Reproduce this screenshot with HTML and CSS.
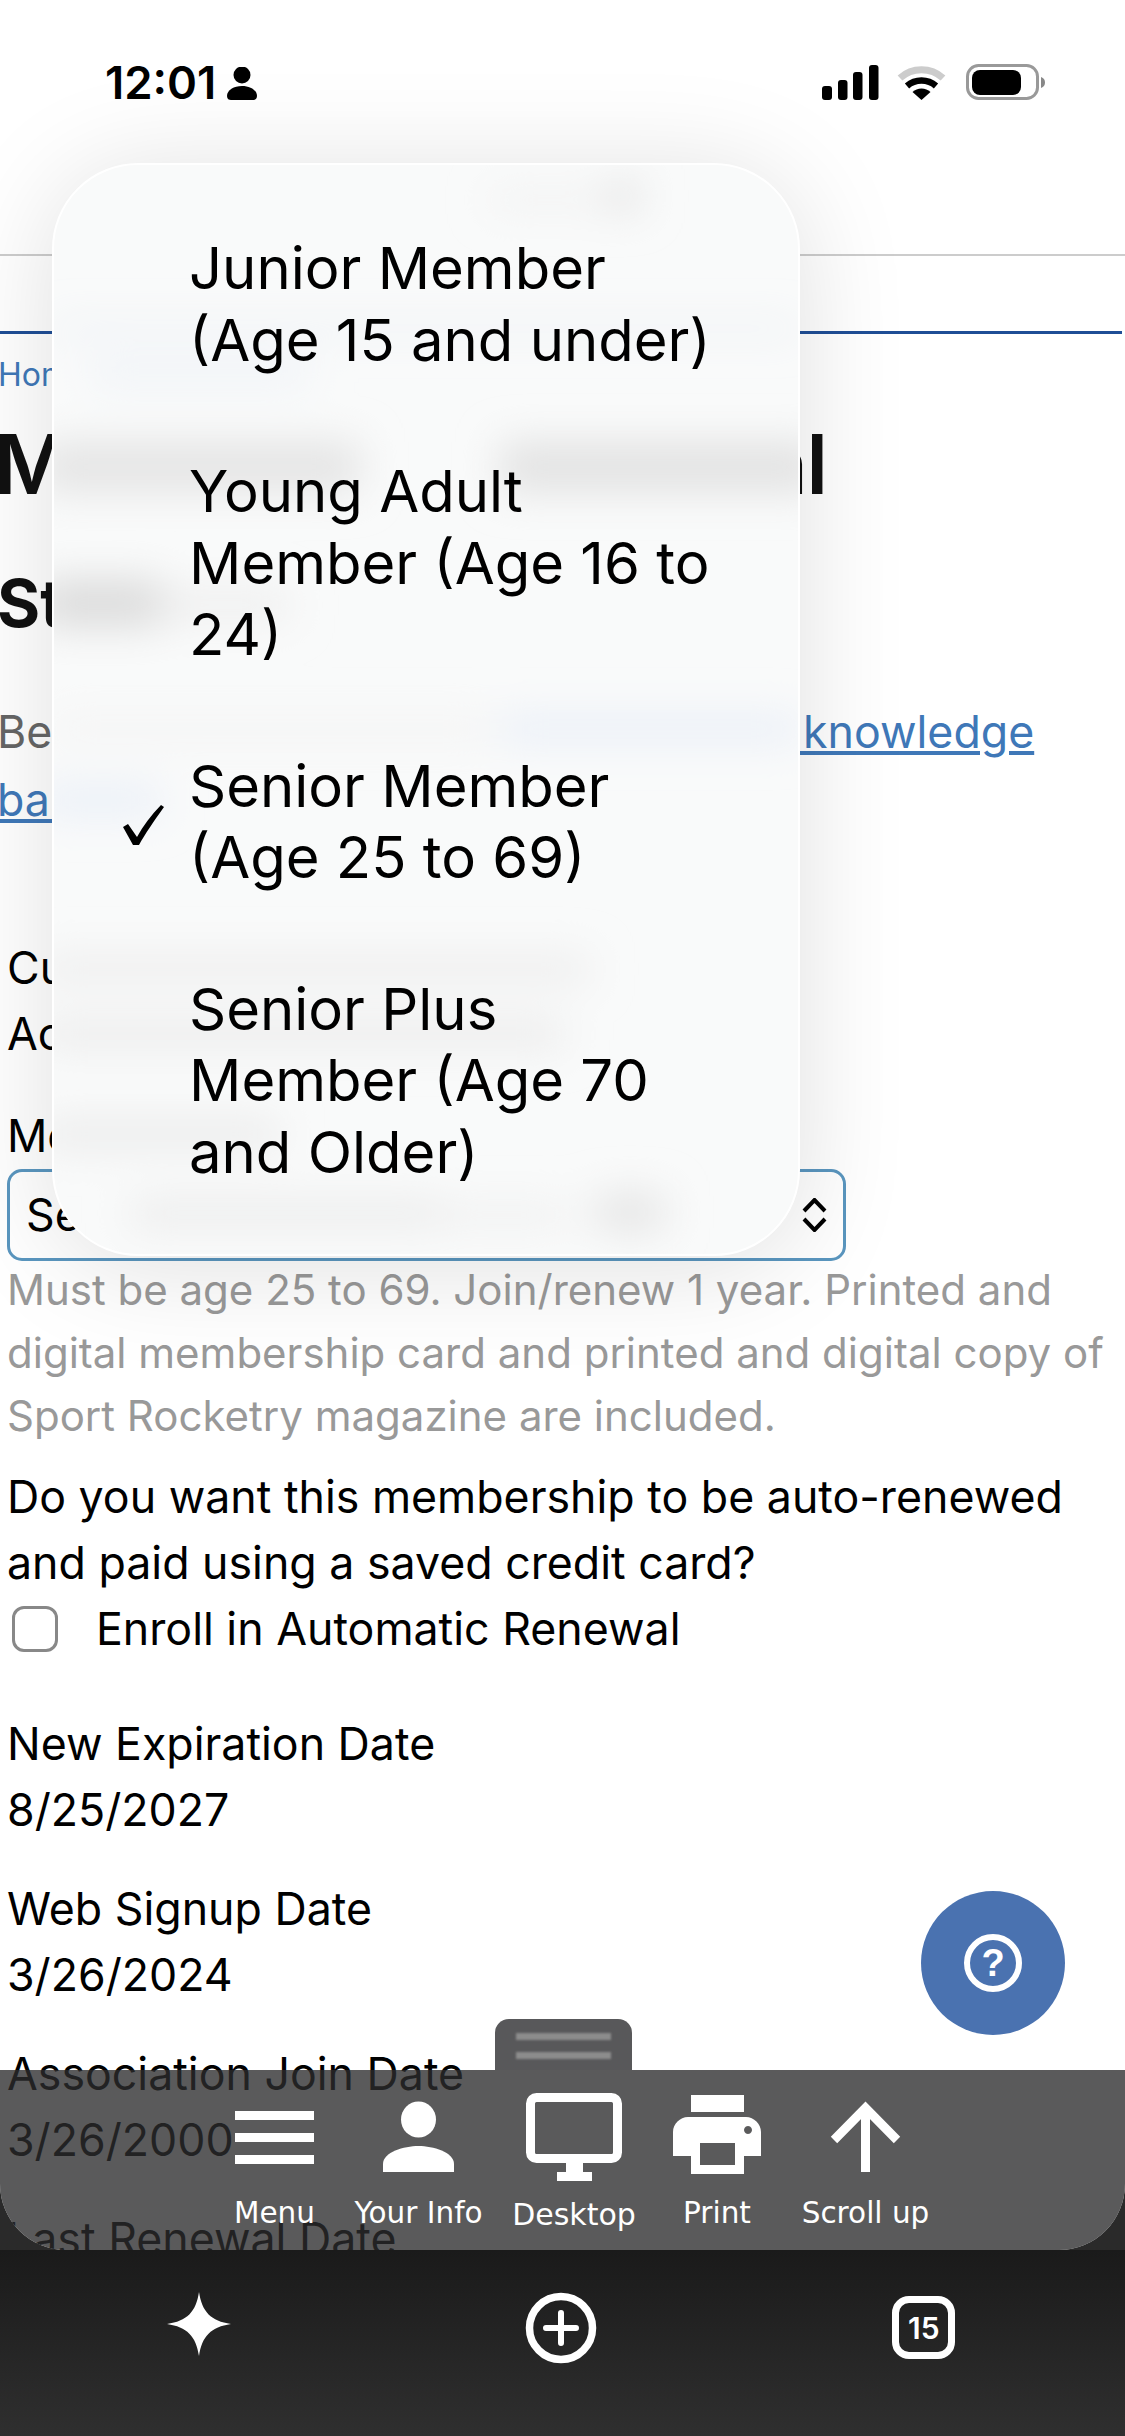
FILE: index.html
```html
<!DOCTYPE html>
<html>
<head>
  <meta name="viewport" content="width=device-width, initial-scale=1.0">
  <title>Membership Renewal</title>
  <link rel="stylesheet" href="styles.css">
</head>
<body>
  <div class="screen">
    <div class="webview">
      <div class="status-bar">
        <span class="status-time">12:01</span>
        <svg class="status-person" width="30" height="34" viewBox="229 67 30 34">
          <circle cx="244" cy="75" r="8.500" fill="#000"/>
          <path d="M229 96c0-6 7-10 15-10s15 4 15 10c0 3-2 4-4 4h-22c-2 0-4-1-4-4z" fill="#000"/>
        </svg>
        <svg class="status-icons" width="223" height="36" viewBox="822 64 223 36">
          <rect x="822" y="86" width="10" height="14" rx="3" fill="#000"/>
          <rect x="838" y="80" width="9.500" height="20" rx="3" fill="#000"/>
          <rect x="853" y="72" width="9.500" height="28" rx="3" fill="#000"/>
          <rect x="869" y="65" width="9.500" height="35" rx="3" fill="#000"/>
          <path d="M900 78a32 32 0 0 1 43 0" fill="none" stroke="#ccc" stroke-width="7"/>
          <path d="M907 86a22 22 0 0 1 29 0" fill="none" stroke="#000" stroke-width="6.500"/>
          <path d="M921.500 100l-9-8a13 13 0 0 1 18 0z" fill="#000"/>
          <rect x="967.500" y="65.500" width="70" height="33" rx="11" fill="none" stroke="#999" stroke-width="3"/>
          <rect x="972" y="70" width="49" height="25" rx="8" fill="#000"/>
          <path d="M1041 77c3 1 4 3 4 5.500s-1 4.500-4 5.500z" fill="#888"/>
        </svg>
      </div>

      <div class="site-header"></div>
      <div class="site-nav"></div>

      <div class="content">
        <div class="breadcrumb">Home &gt; Membership</div>
        <h1 class="page-title">Membership Renewal</h1>
        <h2 class="step-title">Step Two</h2>
        <p class="intro">Be sure you read our <a href="#">renewal policies knowledge base</a></p>

        <div class="form">
          <div class="field-text">Current Membership Status<br>Active Member</div>
          <div class="field-text field-gap">Membership Type</div>
          <div class="select">
            <span>Senior Member (Age 25 to 69)</span>
            <svg width="25" height="34" viewBox="803 1197 25 34">
              <path d="M805 1210l10.500-11 10.500 11M805 1218l10.500 11 10.500-11" fill="none" stroke="#000" stroke-width="4"/>
            </svg>
          </div>
          <div class="help-text">Must be age 25 to 69. Join/renew 1 year. Printed and digital membership card and printed and digital copy of Sport Rocketry magazine are included.</div>
          <div class="field-text question">Do you want this membership to be auto-renewed and paid using a saved credit card?</div>
          <label class="enroll"><span class="checkbox"></span>Enroll in Automatic Renewal</label>
          <div class="dates">
            <div class="field-text">New Expiration Date<br>8/25/2027</div>
            <div class="field-text">Web Signup Date<br>3/26/2024</div>
            <div class="field-text">Association Join Date<br>3/26/2000</div>
            <div class="field-text">Last Renewal Date</div>
          </div>
        </div>
      </div>

      <!-- picker list open over the form -->
      <div class="picker">
        <!-- smudges: the page as it shows through the frosted list -->
        <svg class="picker-smudges" width="748" height="1093" viewBox="52 163 748 1093">
          <defs>
            <filter id="soft" filterUnits="userSpaceOnUse" x="0" y="100" width="900" height="1250">
              <feGaussianBlur stdDeviation="20"/>
            </filter>
          </defs>
          <g filter="url(#soft)">
            <rect x="490" y="192" width="120" height="16" fill="#efefef"/>
            <rect x="610" y="182" width="30" height="28" fill="#e0e0e0"/>
            <rect x="52" y="326" width="748" height="5" fill="#d5dfee"/>
            <rect x="90" y="362" width="220" height="22" fill="#eef2f8"/>
            <rect x="40" y="442" width="320" height="50" fill="#e4e4e4"/>
            <rect x="500" y="442" width="320" height="50" fill="#e2e2e2"/>
            <rect x="40" y="580" width="120" height="46" fill="#dadada"/>
            <rect x="160" y="590" width="130" height="30" fill="#eeeeee"/>
            <rect x="52" y="716" width="440" height="26" fill="#f4f4f4"/>
            <rect x="500" y="716" width="300" height="26" fill="#e8eef8"/>
            <rect x="40" y="786" width="120" height="28" fill="#e8eef8"/>
            <rect x="40" y="955" width="550" height="28" fill="#ededed"/>
            <rect x="40" y="1020" width="525" height="28" fill="#ebebeb"/>
            <rect x="40" y="1120" width="240" height="28" fill="#eaeaea"/>
            <rect x="130" y="1198" width="310" height="30" fill="#ececec"/>
            <rect x="440" y="1204" width="130" height="22" fill="#efefef"/>
            <rect x="595" y="1194" width="70" height="36" fill="#e4e4e4"/>
          </g>
        </svg>
        <div class="picker-item">Junior Member<br>(Age 15 and under)</div>
        <div class="picker-item">Young Adult<br>Member (Age 16 to<br>24)</div>
        <div class="picker-item">
          <svg class="picker-check" width="42" height="41" viewBox="121 803 42 41">
            <path d="M122 825l5-3 9 13c6-11 14-22 24-32l3 2c-10 14-19 27-25 38h-6z" fill="#000"/>
          </svg>
          Senior Member<br>(Age 25 to 69)
        </div>
        <div class="picker-item">Senior Plus<br>Member (Age 70<br>and Older)</div>
      </div>

      <div class="help-button"><span class="help-ring">?</span></div>

      <div class="tools">
        <div class="tools-handle"><span></span><span></span></div>
        <div class="tool tool-menu">
          <svg width="79" height="90" viewBox="235 2092 79 90">
            <rect x="235" y="2111" width="79" height="9" fill="#fff"/>
            <rect x="235" y="2133" width="79" height="9" fill="#fff"/>
            <rect x="235" y="2155" width="79" height="9" fill="#fff"/>
          </svg>
          <span>Menu</span>
        </div>
        <div class="tool tool-info">
          <svg width="71" height="90" viewBox="384 2092 71 90">
            <ellipse cx="419.500" cy="2119.500" rx="17.500" ry="18" fill="#fff"/>
            <path d="M384 2172v-8c0-12 21-18 35.500-18s35.500 6 35.500 18v8z" fill="#fff"/>
          </svg>
          <span>Your Info</span>
        </div>
        <div class="tool tool-desktop">
          <svg width="96" height="90" viewBox="525 2092 96 90">
            <rect x="529.500" y="2097.500" width="87" height="61" rx="6" fill="none" stroke="#fff" stroke-width="9"/>
            <rect x="565" y="2163" width="17" height="9" fill="#fff"/>
            <rect x="556" y="2172" width="35" height="9" fill="#fff"/>
          </svg>
          <span>Desktop</span>
        </div>
        <div class="tool tool-print">
          <svg width="88" height="90" viewBox="673 2092 88 90">
            <rect x="691" y="2095" width="53" height="17" fill="#fff"/>
            <path fill-rule="evenodd" fill="#fff" d="M673 2156v-24c0-8 7-15 15-15h58c8 0 15 7 15 15v24h-17v18h-53v-18zM700 2143v22h35v-22zM748 2126a4 4 0 1 0 .01 0z"/>
          </svg>
          <span>Print</span>
        </div>
        <div class="tool tool-scroll">
          <svg width="129" height="90" viewBox="801 2092 129 90">
            <path d="M865.500 2172v-64M834 2140l31.500-32 31.500 32" fill="none" stroke="#fff" stroke-width="9"/>
          </svg>
          <span>Scroll up</span>
        </div>
      </div>
    </div>

    <div class="toolbar">
      <svg width="64" height="64" viewBox="167 2296 64 64">
        <path d="M199 2296c3 20 12 29 32 32-20 3-29 12-32 32-3-20-12-29-32-32 20-3 29-12 32-32z" fill="#fff"/>
      </svg>
      <svg width="72" height="72" viewBox="0 0 72 72">
        <circle cx="36" cy="36" r="31.500" fill="none" stroke="#fff" stroke-width="7.500"/>
        <path d="M21 36h30M36 21v30" fill="none" stroke="#fff" stroke-width="6" stroke-linecap="round"/>
      </svg>
      <span class="tab-count">15</span>
    </div>
  </div>
</body>
</html>
```

FILE: styles.css
```css
body {
  margin: 0;
  padding: 0;
  font-family: Inter, "Liberation Sans", sans-serif;
}

.screen {
  width: 1125px;
  height: 2436px;
  display: flex;
  flex-direction: column;
  overflow: hidden;
  background-color: #2a2a2a;
}

.webview {
  position: relative;
  height: 2250px;
  overflow: hidden;
  background-color: #fff;
  border-radius: 0 0 66px 66px;
}

/* status bar */
.status-bar {
  height: 130px;
  box-sizing: border-box;
  padding: 64px 80px 0 105px;
  display: flex;
  align-items: flex-start;
}

.status-time {
  font-size: 45.500px;
  font-weight: 600;
  line-height: 38px;
}

.status-person {
  margin: 3px 0 0 11px;
}

.status-icons {
  margin-left: auto;
}

/* site chrome under the status bar */
.site-header {
  height: 124px;
  border-bottom: 2px solid #ccc;
}

.site-nav {
  width: 1122px;
  height: 75px;
  border-bottom: 3px solid #1f4e96;
}

/* page text */
.breadcrumb {
  margin: 21px 0 0 -2px;
  font-size: 32px;
  line-height: 40px;
  color: #3f78b8;
  white-space: nowrap;
}

.page-title {
  margin: 20px 0 0 -6px;
  font-size: 82px;
  font-weight: 600;
  line-height: 100px;
  letter-spacing: -1.200px;
  color: #111;
  white-space: nowrap;
}

.step-title {
  margin: 48px 0 0 -3px;
  font-size: 66px;
  font-weight: 700;
  line-height: 80px;
  color: #111;
}

.intro {
  margin: 55px 0 0 -3px;
  font-size: 44.700px;
  line-height: 68px;
  color: #666;
  width: 1090px;
}

.intro a {
  color: #3f78b8;
}

.form {
  margin-top: 101px;
  padding: 0 7px;
}

.field-text {
  font-size: 44.700px;
  line-height: 66px;
  color: #000;
}

.field-gap {
  margin-top: 36px;
}

.select {
  box-sizing: border-box;
  width: 839px;
  height: 92px;
  padding: 0 16px;
  display: flex;
  align-items: center;
  justify-content: space-between;
  font-size: 44.700px;
  border: 3px solid #5a96bf;
  border-radius: 15px;
}

.help-text {
  margin-top: -3px;
  font-size: 42px;
  line-height: 63px;
  color: #999;
}

.question {
  margin-top: 17px;
}

.enroll {
  display: flex;
  align-items: center;
  font-size: 44.700px;
  line-height: 66px;
}

.checkbox {
  box-sizing: border-box;
  width: 46px;
  height: 46px;
  margin: 0 38px 0 5px;
  border: 3px solid #888;
  border-radius: 12px;
}

.dates {
  margin-top: 49px;
  display: flex;
  flex-direction: column;
  gap: 33px;
}

/* picker */
.picker {
  position: absolute;
  left: 52px;
  top: 163px;
  width: 748px;
  height: 1093px;
  box-sizing: border-box;
  padding: 28px 0;
  overflow: hidden;
  background-color: #f9fafa;
  border: 2px solid #fff;
  border-radius: 86px;
  box-shadow: 0 10px 110px rgba(0, 0, 0, 0.13);
}

.picker-smudges {
  position: absolute;
  left: -2px;
  top: -2px;
}

.picker-item {
  position: relative;
  padding: 40px 0 40px 135px;
  font-size: 58px;
  line-height: 71.500px;
  color: #000;
  white-space: nowrap;
}

.picker-check {
  position: absolute;
  left: 68px;
  top: 94px;
}

/* floating buttons */
.help-button {
  position: absolute;
  left: 921px;
  top: 1891px;
  width: 144px;
  height: 144px;
  display: flex;
  align-items: center;
  justify-content: center;
  border-radius: 50%;
  background-color: #4a72b0;
}

.help-ring {
  box-sizing: border-box;
  width: 58px;
  height: 58px;
  display: flex;
  align-items: center;
  justify-content: center;
  font-family: "Liberation Sans", sans-serif;
  font-size: 38px;
  font-weight: 700;
  color: #fff;
  border: 6px solid #fff;
  border-radius: 50%;
}

.tools {
  position: absolute;
  left: 0;
  right: 0;
  bottom: 0;
  height: 180px;
  box-sizing: border-box;
  padding: 22px 0 0 235px;
  display: flex;
  align-items: flex-start;
  background-color: rgba(43, 43, 45, 0.78);
}

.tools-handle {
  position: absolute;
  left: 495px;
  top: -51px;
  width: 137px;
  height: 51px;
  box-sizing: border-box;
  padding: 14px 21px 0;
  display: flex;
  flex-direction: column;
  gap: 12px;
  background-color: #58585a;
  border-radius: 14px 14px 0 0;
}

.tools-handle span {
  height: 7px;
  background-color: #8c8c8c;
  filter: blur(1px);
}

.tool {
  display: flex;
  flex-direction: column;
  align-items: center;
  font-family: "DejaVu Sans", sans-serif;
  font-size: 29.500px;
  line-height: 40px;
  color: #fff;
  white-space: nowrap;
}

.tool span {
  margin-top: 11px;
}

.tool-menu {
  width: 79px;
}

.tool-info {
  width: 123px;
  margin-left: 43px;
}

.tool-desktop {
  width: 120px;
  margin-left: 34px;
}

.tool-desktop span {
  margin-top: 13px;
  font-size: 30px;
}

.tool-print {
  width: 88px;
  margin-left: 39px;
}

.tool-scroll {
  width: 129px;
  margin-left: 40px;
}

/* browser toolbar */
.toolbar {
  flex: 1;
  padding: 42px 20px 0 18px;
  display: grid;
  grid-template-columns: repeat(3, 1fr);
  justify-items: center;
  align-items: start;
  background: linear-gradient(#1a1a1a, #2f2f2f);
}

.tab-count {
  box-sizing: border-box;
  width: 63px;
  height: 63px;
  margin-top: 4px;
  display: flex;
  align-items: center;
  justify-content: center;
  font-size: 30px;
  font-weight: 600;
  color: #fff;
  border: 7px solid #fff;
  border-radius: 17px;
}
```
